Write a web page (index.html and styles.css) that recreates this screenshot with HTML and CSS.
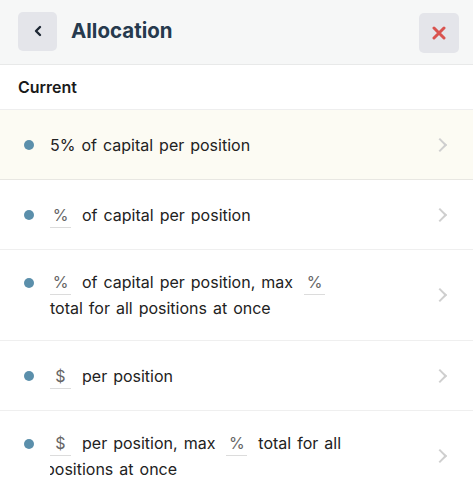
FILE: index.html
```html
<!DOCTYPE html>
<html>
<head>
<meta charset="utf-8">
<link rel="stylesheet" href="styles.css">
</head>
<body>
<div class="panel">
  <header class="header">
    <button class="icon-btn back" aria-label="Back">
      <svg width="12" height="12" viewBox="0 0 12 12"><path d="M8 2 L4 6 L8 10" fill="none" stroke="#1d2733" stroke-width="2.4" stroke-linecap="round" stroke-linejoin="round"/></svg>
    </button>
    <h1 class="title">Allocation</h1>
    <button class="icon-btn close" aria-label="Close">
      <svg width="14" height="14" viewBox="0 0 14 14"><path d="M2 2 L12 12 M12 2 L2 12" fill="none" stroke="#d9534f" stroke-width="3" stroke-linecap="round"/></svg>
    </button>
  </header>
  <div class="section-label">Current</div>
  <ul class="options">
    <li class="option current">
      <span class="dot"></span>
      <div class="text">5% of capital per position</div>
      <span class="chev"></span>
    </li>
    <li class="option">
      <span class="dot"></span>
      <div class="text"><span class="field first">%</span>of capital per position</div>
      <span class="chev"></span>
    </li>
    <li class="option">
      <span class="dot"></span>
      <div class="text"><span class="field first">%</span>of capital per position, max<span class="field">%</span><br>total for all positions at once</div>
      <span class="chev"></span>
    </li>
    <li class="option">
      <span class="dot"></span>
      <div class="text"><span class="field first">$</span>per position</div>
      <span class="chev"></span>
    </li>
    <li class="option">
      <span class="dot"></span>
      <div class="text clipped"><span class="field first">$</span>per position, max<span class="field">%</span>total for all<br>positions at once</div>
      <span class="chev"></span>
    </li>
  </ul>
</div>
</body>
</html>
```
FILE: styles.css
```css
* { box-sizing: border-box; }
html, body { margin: 0; padding: 0; background: #fff; }
body {
  font-family: "Inter", "Liberation Sans", sans-serif;
  color: #222;
  width: 473px;
  height: 500px;
  overflow: hidden;
}
.panel { display: flex; flex-direction: column; }
.header {
  height: 65px;
  background: #f6f7f7;
  border-bottom: 1px solid #e8e9e9;
  display: flex;
  align-items: center;
  padding: 0 14px 0 18px;
}
.icon-btn {
  width: 39px;
  height: 39px;
  border: 0;
  border-radius: 5px;
  background: #e4e5ea;
  display: flex;
  align-items: center;
  justify-content: center;
  padding: 0;
  margin: -2px 0 0 0;
}
.close { margin-left: auto; width: 40px; height: 40px; margin-top: 1px; }
.title {
  margin: -4px 0 0 14px;
  font-size: 20.5px;
  font-weight: 700;
  color: #263a4e;
}
.section-label {
  height: 45px;
  display: flex;
  align-items: center;
  padding-left: 18px;
  font-size: 16px;
  font-weight: 600;
  color: #1a1a1a;
  border-bottom: 1px solid #eeeeee;
}
.options { list-style: none; margin: 0; padding: 0; }
.option {
  display: flex;
  align-items: center;
  min-height: 70px;
  padding: 19px 0 19px 24px;
  border-bottom: 1px solid #efefef;
  font-size: 16px;
}
.option.current { background: #fcfbf3; border-bottom-color: #e8e7e2; }
.dot {
  width: 10px;
  height: 10px;
  border-radius: 50%;
  background: #5b8fab;
  flex: none;
  align-self: flex-start;
  margin-top: 9px;
}
.option.current .dot, .option:nth-child(2) .dot, .option:nth-child(4) .dot { align-self: center; margin-top: 0; }
.text {
  flex: 1;
  margin-left: 16px;
  line-height: 26px;
  color: #222;
  word-spacing: 1.5px;
}
.text.clipped {
  margin-left: 11px;
  text-indent: 5px;
  clip-path: inset(0 0 0 5px);
}
.field {
  display: inline-block;
  width: 21px;
  text-align: center;
  color: #666;
  border-bottom: 1px solid #dcdcdc;
  line-height: 24px;
  margin: 0 11px;
  text-indent: 0;
}
.field.first { margin-left: 0; }
.chev {
  flex: none;
  width: 10px;
  height: 10px;
  border-right: 2.5px solid #cfcfcf;
  border-top: 2.5px solid #cfcfcf;
  transform: rotate(45deg);
  margin: 0 28px 0 20px;
}
```
